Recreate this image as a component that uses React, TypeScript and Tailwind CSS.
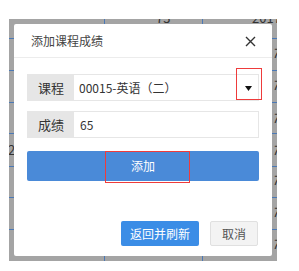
import React from "react";

const font = { fontFamily: '"Noto Sans CJK SC", "Noto Sans", sans-serif' };

export default function App() {
  const rowYs = [19, 51, 83, 114, 147, 178, 210];
  const sevens = [27, 59, 92, 124, 154, 186, 218];
  return (
    <div className="w-[299px] h-[271px] bg-white pt-[19px] pl-[9px]" style={font}>
      <div className="relative w-[268px] h-[242px] bg-[#a4a4a4] p-[5px] overflow-hidden">
        {rowYs.map((y) => (
          <div key={y} className="absolute left-0 right-0 h-px bg-[#4b79b5]" style={{ top: y }} />
        ))}
        <div className="absolute top-0 bottom-0 left-[95px] w-px bg-[#4b79b5]" />
        <div className="absolute top-0 bottom-0 left-[193px] w-px bg-[#4b79b5]" />
        {sevens.map((y) => (
          <span key={y} className="absolute left-[263px] text-[13px] leading-none text-[#333] italic" style={{ top: y }}>
            7
          </span>
        ))}
        <span className="absolute left-[147px] top-[-8px] text-[13px] leading-none text-[#333]">73</span>
        <span className="absolute left-[243px] top-[-8px] text-[13px] leading-none text-[#333]">2017</span>
        <span className="absolute left-[-1px] top-[124px] text-[13px] leading-none text-[#333]">2</span>

        <div className="relative z-10 w-[258px] h-[232px] bg-white rounded-[2px] flex flex-col">
          <div className="h-[34px] border-b border-[#ececec] flex items-center justify-between pl-[17px] pr-[16px]">
            <span className="text-[12px] text-[#444]">添加课程成绩</span>
            <svg width="11" height="11" viewBox="0 0 11 11" className="mt-[1px]">
              <path d="M1 1L10 10M10 1L1 10" stroke="#333" strokeWidth="1.4" />
            </svg>
          </div>
          <div className="flex flex-col px-[13px] pt-[16px]">
            <div className="flex h-[27px] border border-[#e6e6e6]">
              <div className="w-[46px] bg-[#e6e6e6] flex items-center justify-center text-[13px] text-[#333]">课程</div>
              <div className="flex-1 flex items-center justify-between pl-[5px] pr-[6px] text-[12px] text-[#333]">
                <span>00015-英语（二）</span>
                <svg width="7" height="5" viewBox="0 0 7 5" className="mt-[2px]">
                  <path d="M0 0H7L3.5 5Z" fill="#111" />
                </svg>
              </div>
            </div>
            <div className="flex h-[27px] border border-[#e6e6e6] mt-[10px]">
              <div className="w-[46px] bg-[#e6e6e6] flex items-center justify-center text-[13px] text-[#333]">成绩</div>
              <div className="flex-1 flex items-center pl-[6px] text-[12px] text-[#333]">65</div>
            </div>
            <div className="mt-[13px] h-[30px] rounded-[2px] bg-[#4a8ad8] flex items-center justify-center text-[12px] text-white">
              添加
            </div>
          </div>
          <div className="mt-auto mb-[10px] flex justify-end gap-[11px] pr-[14px]">
            <div className="w-[78px] h-[25px] rounded-[2px] bg-[#3b8de6] flex items-center justify-center text-[12px] text-white">
              返回并刷新
            </div>
            <div className="w-[48px] h-[25px] rounded-[2px] bg-[#f3f3f3] border border-[#e0e0e0] flex items-center justify-center text-[12px] text-[#555]">
              取消
            </div>
          </div>
          <div className="absolute left-[222px] top-[44px] w-[26px] h-[32px] border-[1.5px] border-[#ee3b3b]" />
          <div className="absolute left-[91px] top-[127px] w-[85px] h-[32px] border-[1.5px] border-[#ee3b3b]" />
        </div>
      </div>
    </div>
  );
}
